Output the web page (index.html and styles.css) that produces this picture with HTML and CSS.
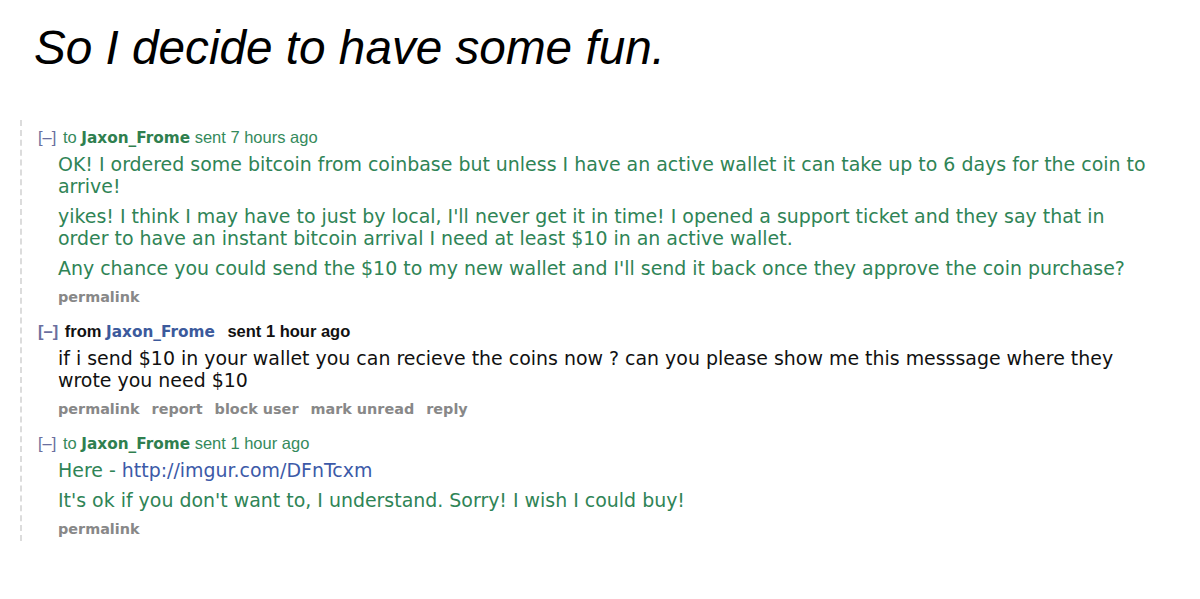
FILE: index.html
```html
<!DOCTYPE html>
<html lang="en">
<head>
    <meta charset="UTF-8">
    <title>So I decide to have some fun.</title>
    <link rel="stylesheet" href="styles.css">
</head>
<body>

<h1 class="caption">So I decide to have some fun.</h1>

<div class="thread">

    <!-- message 1 -->
    <div class="message">
        <p class="tagline">
            <span class="expand">[&ndash;]</span> to <span class="author">Jaxon_Frome</span> sent 7 hours ago
        </p>
        <div class="body">
            <p>OK! I ordered some bitcoin from coinbase but unless I have an active wallet it can take up to 6 days for the coin to arrive!</p>
            <p>yikes! I think I may have to just by local, I'll never get it in time! I opened a support ticket and they say that in order to have an instant bitcoin arrival I need at least $10 in an active wallet.</p>
            <p>Any chance you could send the $10 to my new wallet and I'll send it back once they approve the coin purchase?</p>
        </div>
        <ul class="buttons">
            <li>permalink</li>
        </ul>
    </div>

    <!-- message 2 -->
    <div class="message received">
        <p class="tagline">
            <span class="expand">[&ndash;]</span> from <span class="author">Jaxon_Frome</span> <span class="when">sent 1 hour ago</span>
        </p>
        <div class="body">
            <p>if i send $10 in your wallet you can recieve the coins now ? can you please show me this messsage where they wrote you need $10</p>
        </div>
        <ul class="buttons">
            <li>permalink</li>
            <li>report</li>
            <li>block user</li>
            <li>mark unread</li>
            <li>reply</li>
        </ul>
    </div>

    <!-- message 3 -->
    <div class="message">
        <p class="tagline">
            <span class="expand">[&ndash;]</span> to <span class="author">Jaxon_Frome</span> sent 1 hour ago
        </p>
        <div class="body">
            <p>Here - <a href="#">http://imgur.com/DFnTcxm</a></p>
            <p>It's ok if you don't want to, I understand. Sorry! I wish I could buy!</p>
        </div>
        <ul class="buttons">
            <li>permalink</li>
        </ul>
    </div>

</div>

</body>
</html>
```

FILE: styles.css
```css
body {
    margin: 0;
    background: #fff;
    font-family: "DejaVu Sans", Verdana, sans-serif;
}
.caption {
    margin: 0;
    padding: 20px 0 0 34px;
    font-family: "Liberation Sans", Arial, sans-serif;
    font-style: italic;
    font-weight: normal;
    font-size: 47.7px;
    line-height: 56px;
    color: #000;
}
.thread {
    margin: 44px 0 0 20px;
    padding: 6px 0 2px 16px;
    border-left: 2px dashed #dcdcdc;
    width: 1115px;
}
.message {
    margin-bottom: 13px;
}
.message:last-child {
    margin-bottom: 0;
}
.tagline {
    margin: 0;
    font-family: "Liberation Sans", Arial, sans-serif;
    font-size: 16.5px;
    line-height: 22px;
    color: #358a5c;
}
.tagline span {
    line-height: 1;
}
.expand {
    color: #6a6f9e;
    margin-right: 2px;
}
.author {
    font-family: "DejaVu Sans", Verdana, sans-serif;
    font-weight: bold;
    font-size: 15.3px;
    color: #2f7f4f;
}
.received .tagline {
    color: #111;
    font-weight: bold;
}
.received .author {
    color: #3c5a9c;
    margin-right: 8px;
}
.body {
    padding-left: 20px;
    color: #2f8456;
    font-size: 18.95px;
}
.body p {
    margin: 5px 0 8px;
    line-height: 22px;
}
.body p + p {
    margin-top: 0;
}
.received .body {
    color: #111;
}
.body a {
    color: #3c5aa8;
    text-decoration: none;
}
.buttons {
    list-style: none;
    margin: 0;
    padding: 0 0 0 20px;
    display: flex;
    gap: 12px;
}
.buttons li {
    font-size: 14.4px;
    font-weight: bold;
    color: #888;
    line-height: 20px;
}
```
